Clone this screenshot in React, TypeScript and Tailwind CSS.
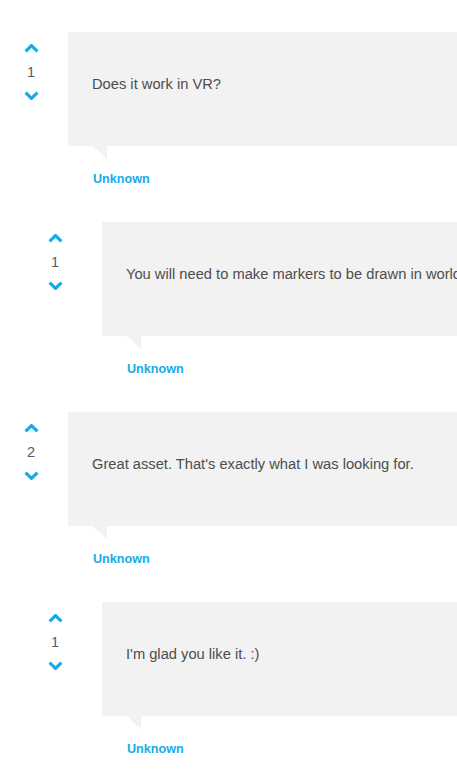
const comments = [
    { votes: 1, text: "Does it work in VR?", author: "Unknown", reply: false },
    { votes: 1, text: "You will need to make markers to be drawn in world space, so yes, it should work in VR too.", author: "Unknown", reply: true },
    { votes: 2, text: "Great asset. That's exactly what I was looking for.", author: "Unknown", reply: false },
    { votes: 1, text: "I'm glad you like it. :)", author: "Unknown", reply: true },
]

const Chevron = ({ down }: { down?: boolean }) => (
    <svg width="15" height="9" viewBox="0 0 15 9" className="block">
        <polyline
            points={down ? "1.6,1.6 7.5,7.4 13.4,1.6" : "1.6,7.4 7.5,1.6 13.4,7.4"}
            fill="none"
            stroke="#16abe8"
            strokeWidth="3.2"
        />
    </svg>
)

const Comment = ({ votes, text, author, reply }: { votes: number; text: string; author: string; reply: boolean }) => {
    return (
        <div className={`flex ${reply ? "pl-6" : ""} mb-[35px]`}>
            <div className={`w-[62px] shrink-0 flex flex-col items-center pt-3 ${reply ? "mr-4" : "mr-[6px]"}`}>
                <Chevron />
                <div className="mt-[9px] mb-[9px] leading-5 text-[14.5px] text-[#5a5a5a]">{votes}</div>
                <Chevron down />
            </div>
            <div className="flex-1 flex flex-col">
                <div className="h-[114px] bg-[#f2f2f2] pl-6 pt-[43px] text-[14.7px] leading-[18px] text-[#4d4d4d] whitespace-nowrap">
                    {text}
                </div>
                <div className="ml-[25px] w-0 h-0 border-t-[13px] border-t-[#f2f2f2] border-l-[14px] border-l-transparent" />
                <div className="mt-[12px] ml-[25px] text-[12.6px] leading-4 font-bold text-[#16abe8]">{author}</div>
            </div>
        </div>
    )
}

export default function App() {
    return (
        <div className="w-[457px] h-[780px] overflow-hidden bg-white font-['Liberation_Sans',Arial,sans-serif]">
            <div className="w-[900px] pt-8">
                {comments.map((c, i) => (
                    <Comment key={i} {...c} />
                ))}
            </div>
        </div>
    )
}
